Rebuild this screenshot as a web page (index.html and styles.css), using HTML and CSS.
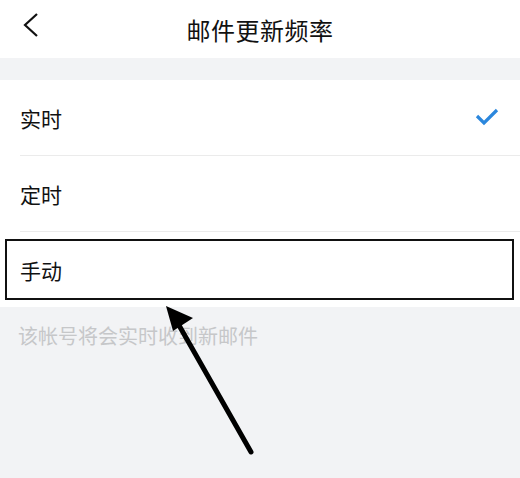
FILE: index.html
```html
<!DOCTYPE html>
<html lang="zh">
<head>
  <meta charset="UTF-8" />
  <meta name="viewport" content="width=device-width, initial-scale=1" />
  <title>邮件更新频率</title>
  <link rel="stylesheet" href="styles.css">
</head>
<body>

<div class="page">
  <header class="topbar">
    <span class="back">
      <svg width="18" height="26" viewBox="0 0 18 26">
        <path d="M15 2 L3 13 L15 24" fill="none" stroke="#111" stroke-width="2.2" />
      </svg>
    </span>
    <h1 class="title">邮件更新频率</h1>
  </header>

  <ul class="options">
    <li class="option">
      <span>实时</span>
      <svg class="check" width="26" height="20" viewBox="0 0 26 20">
        <path d="M3 9 L10 16 L23 3" fill="none" stroke="#2b87dd" stroke-width="3.2" />
      </svg>
    </li>
    <li class="option">
      <span>定时</span>
    </li>
    <li class="option">
      <span>手动</span>
      <div class="highlight"></div>
    </li>
  </ul>

  <p class="hint">该帐号将会实时收到新邮件</p>

  <!-- annotation arrow -->
  <svg class="arrow" width="520" height="478" viewBox="0 0 520 478">
    <line x1="251" y1="452" x2="176" y2="320" stroke="#000" stroke-width="5" stroke-linecap="round" />
    <polygon points="166,306 193,318 173,331" fill="#000" />
  </svg>
</div>

</body>
</html>
```

FILE: styles.css
```css
:root {
  --bg: #f2f3f5;
  --line: #ebebeb;
  --text: #111;
  --hint: #c6c7c9;
}

body {
  margin: 0;
  background: var(--bg);
  font-family: "Noto Sans CJK SC", "Noto Sans", sans-serif;
  color: var(--text);
}

.page {
  position: relative;
  width: 520px;
  height: 478px;
  overflow: hidden;
}

.topbar {
  height: 58px;
  background: #fff;
  display: flex;
  align-items: center;
  justify-content: center;
  position: relative;
}

.back {
  position: absolute;
  left: 22px;
  top: 12px;
}

.title {
  margin: 0;
  font-size: 24px;
  font-weight: 400;
  letter-spacing: 0.5px;
}

.options {
  list-style: none;
  margin: 22px 0 0;
  padding: 0 0 0 20px;
  background: #fff;
}

.option {
  height: 75px;
  display: flex;
  align-items: center;
  justify-content: space-between;
  padding-right: 20px;
  font-size: 21px;
  border-bottom: 1px solid var(--line);
  position: relative;
}

.option:last-child {
  border-bottom: none;
}

.check {
  margin-top: -2px;
}

.highlight {
  position: absolute;
  left: -15px;
  right: 6px;
  top: 7px;
  bottom: 7px;
  border: 2px solid #111;
}

.hint {
  margin: 14px 0 0 18px;
  font-size: 20px;
  color: var(--hint);
}

.arrow {
  position: absolute;
  left: 0;
  top: 0;
}
```
